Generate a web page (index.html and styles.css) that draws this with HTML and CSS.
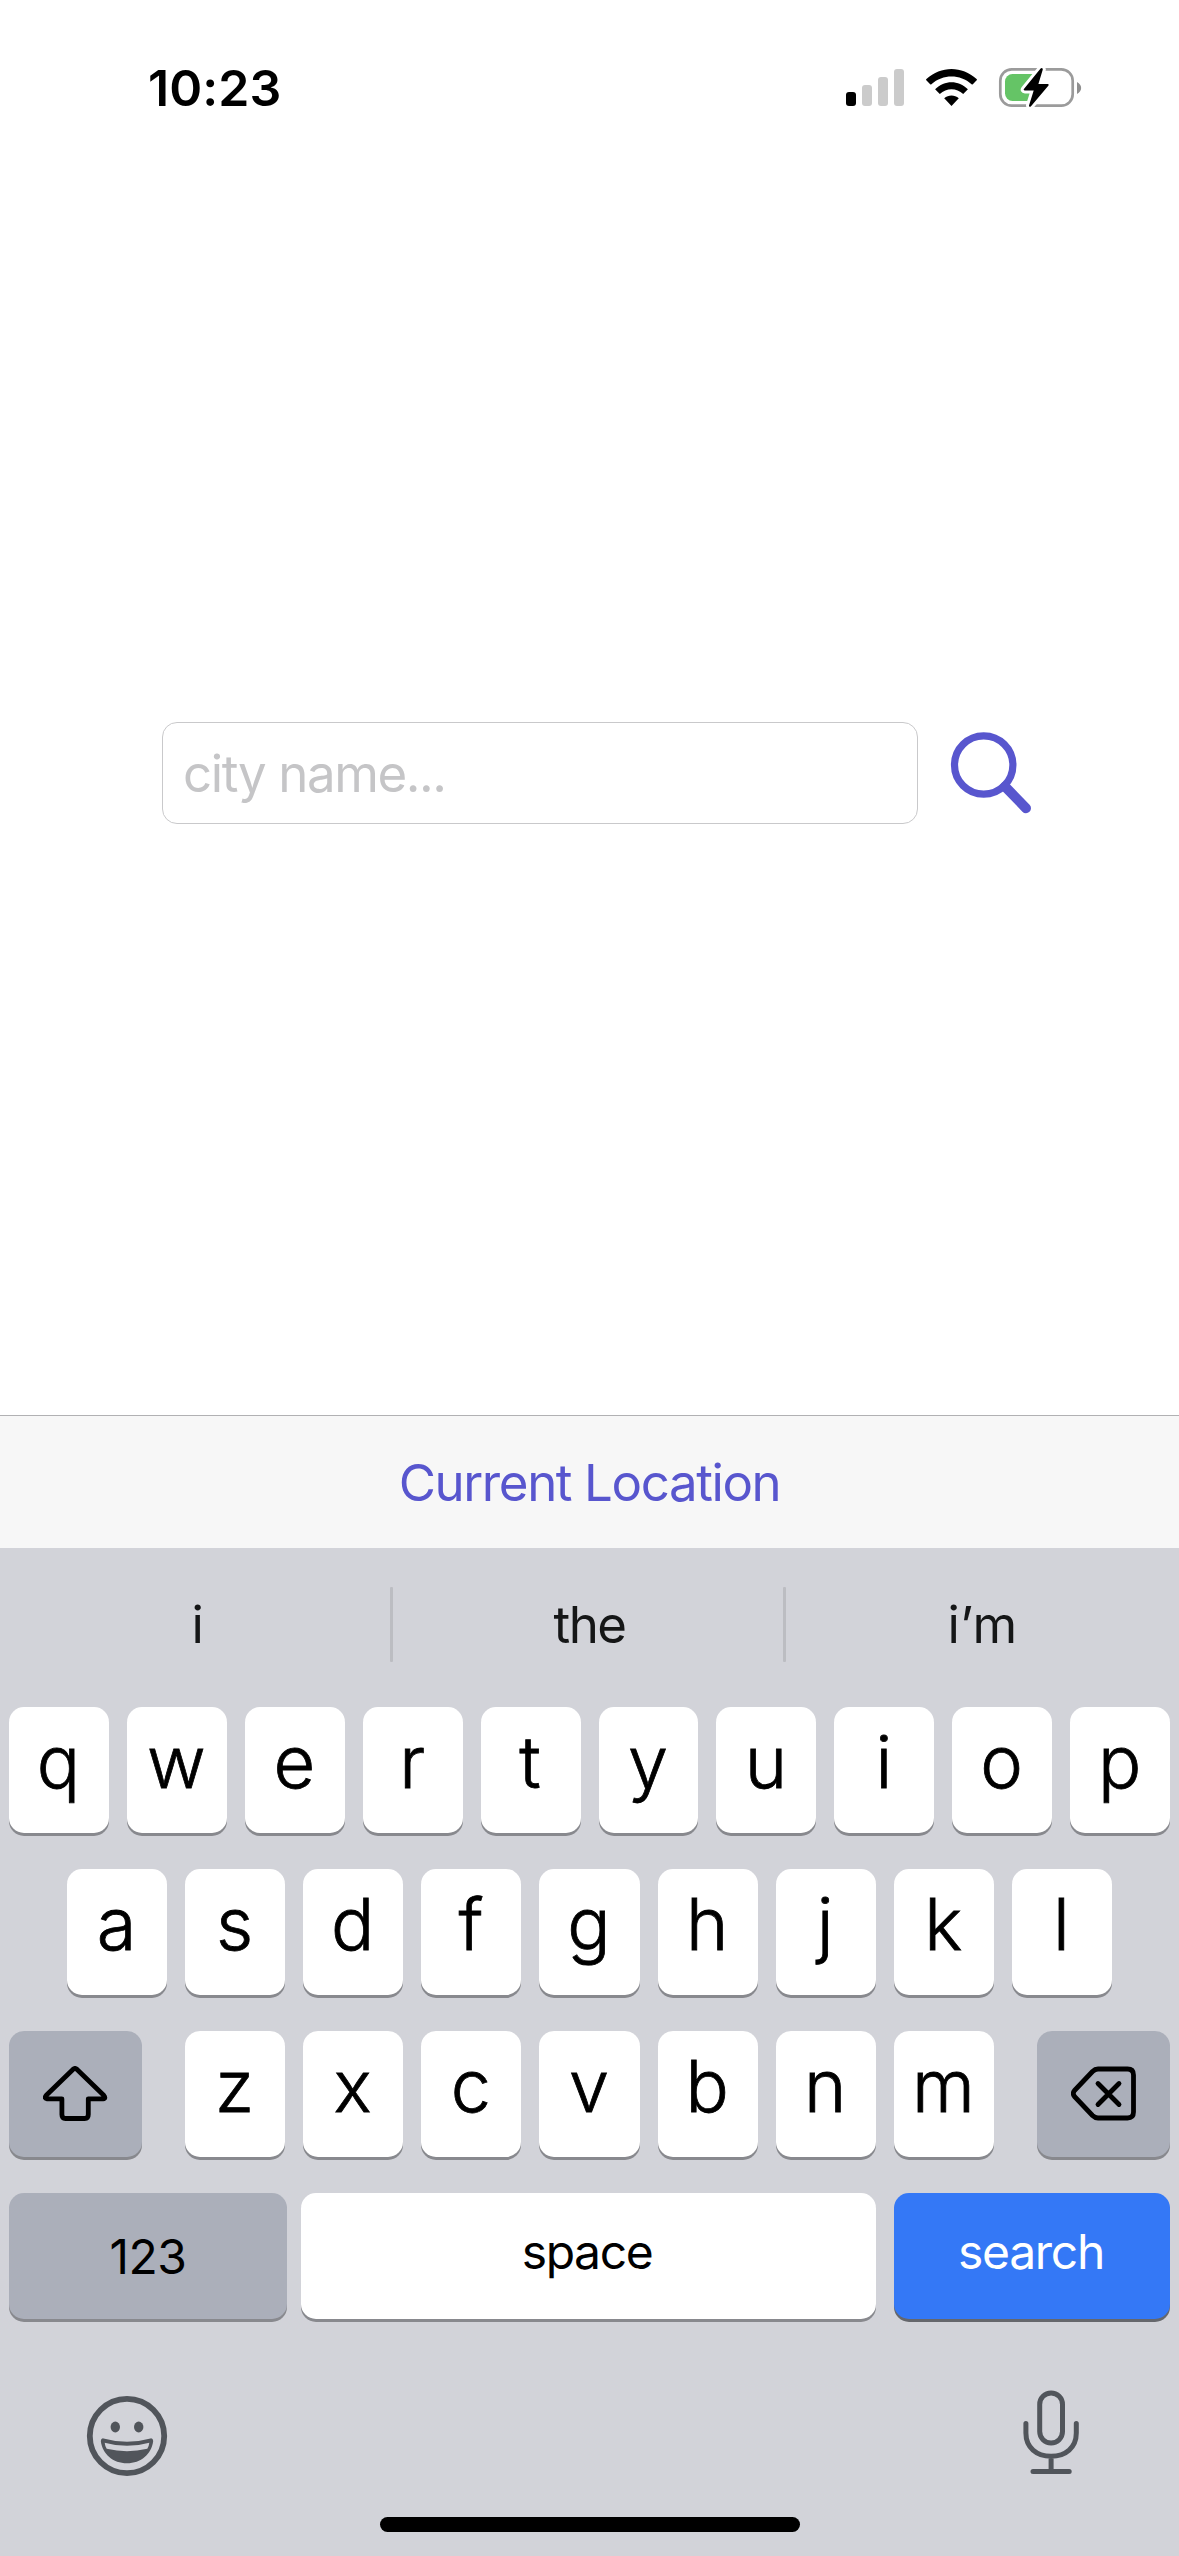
FILE: index.html
```html
<!DOCTYPE html>
<html lang="en">
<head>
<meta charset="utf-8">
<title>City search</title>
<link rel="stylesheet" href="styles.css">
</head>
<body>
<div class="screen">
  <header class="status">
    <span class="time">10:23</span>
    <svg class="status-icons" width="240" height="44" viewBox="0 0 240 44">
      <rect x="0" y="26" width="10" height="14" rx="3"/>
      <g fill="#cbcbcb">
        <rect x="16" y="19" width="10" height="21" rx="3"/>
        <rect x="32" y="11" width="10" height="29" rx="3"/>
        <rect x="48" y="3" width="10" height="37" rx="3"/>
      </g>
      <path d="M80.3 14.2Q79.8 13.6 80.4 13C95 -.4 116 -.4 130.600 13Q131.200 13.600 130.700 14.200L126.800 18.300Q126.200 18.800 125.600 18.300C114 8 97 8 85.400 18.300Q84.800 18.800 84.200 18.300Z"/>
      <path d="M89.100 23.300C98.500 13.900 112.500 13.900 121.900 23.300L117.200 27.900C110.500 21.600 100.500 21.600 93.800 27.900Z"/>
      <path d="M98.200 32.300C102.500 28.500 108.500 28.500 112.800 32.300L105.500 40Z"/>
      <rect x="154.300" y="3.300" width="72.400" height="36.400" rx="11.500" fill="none" stroke="#9b9b9b" stroke-width="2.700"/>
      <path d="M231 16V28C236.500 25 236.500 19 231 16Z" fill="#8f8f8f"/>
      <rect x="159" y="8" width="36" height="27" rx="7.500" fill="#65c466"/>
      <path d="M191 8H200V20H205L191 35H184Z" fill="#fff"/>
      <path transform="translate(-.7 0)" d="M195.300 2.600L178.800 22.800Q177.600 24.400 179.600 24.400H188.400L183.700 39.400Q183.600 41.500 185.500 40.400L203.200 19.600Q204.200 18 202.300 18H193.100L197.500 3.500Q197.100 1.200 195.300 2.600Z" stroke="#fff" stroke-width="6" paint-order="stroke"/>
    </svg>
  </header>

  <main class="content">
    <form class="search">
      <input class="city" type="text" placeholder="city name...">
      <svg class="glass" width="84" height="84" viewBox="0 0 84 84" fill="none" stroke="#5856ce" stroke-linecap="round">
        <circle cx="34.700" cy="34" r="29.200" stroke-width="7.200"/>
        <path d="M56 55.500L77 77.200" stroke-width="10"/>
      </svg>
    </form>
  </main>

  <div class="toolbar"><span class="location">Current Location</span></div>

  <section class="keyboard">
    <div class="suggestions">
      <span>i</span><i class="divider"></i><span>the</span><i class="divider"></i><span>i’m</span>
    </div>
    <div class="row">
      <b>q</b><b>w</b><b>e</b><b>r</b><b>t</b><b>y</b><b>u</b><b>i</b><b>o</b><b>p</b>
    </div>
    <div class="row row-home">
      <b>a</b><b>s</b><b>d</b><b>f</b><b>g</b><b>h</b><b>j</b><b>k</b><b>l</b>
    </div>
    <div class="row row-lower">
      <div class="key side">
        <svg width="66" height="56" viewBox="1 0 66 56" fill="none" stroke="#000" stroke-width="4.800" stroke-linejoin="round">
          <path d="M31.200 3.200Q33 1.700 34.800 3.200L61.700 29.300Q64.300 32.400 61 32.800H46.300V48.500Q46.300 52.500 42.700 52.500H23.500Q19.900 52.500 19.900 48.500V32.800H5Q1.700 32.400 4.300 29.300Z"/>
        </svg>
      </div>
      <div class="letters"><b>z</b><b>x</b><b>c</b><b>v</b><b>b</b><b>n</b><b>m</b></div>
      <div class="key side">
        <svg width="66" height="56" viewBox="0.500 0 66 56" fill="none" stroke="#000" stroke-width="4.800" stroke-linecap="round" stroke-linejoin="round">
          <path d="M27.500 3H57Q63 3 63 9V46Q63 52 57 52H27.500Q24.500 52 22 49.500L4 30.500Q1.600 27.500 4 24.500L22 5.500Q24.500 3 27.500 3Z"/>
          <path d="M27.500 17.500L48.500 38.500M48.500 17.500L27.500 38.500"/>
        </svg>
      </div>
    </div>
    <div class="row row-bottom">
      <div class="key numbers">123</div>
      <div class="key space">space</div>
      <div class="key go">search</div>
    </div>
    <footer class="dock">
      <svg width="82" height="82" viewBox="0 0 82 82" fill="#51555b">
        <circle cx="41" cy="41" r="37.200" fill="none" stroke="#51555b" stroke-width="5.800"/>
        <ellipse cx="29.300" cy="32" rx="4.700" ry="5.400"/>
        <ellipse cx="52.700" cy="32" rx="4.700" ry="5.400"/>
        <path fill-rule="evenodd" d="M17.500 43.400Q41 50 64.500 43.400Q67 43 67.200 46C65.500 59 55 68.300 41 68.300S16.500 59 14.800 46Q15 43 17.500 43.400ZM18.700 47.700Q19 51 20.700 53.800Q41 58.500 61.300 53.800Q63 51 63.300 47.700Q41 54 18.700 47.700Z"/>
      </svg>
      <svg width="58" height="88" viewBox="0 0 58 88" fill="none" stroke="#51555b" stroke-width="5" stroke-linecap="round">
        <rect x="17.700" y="4" width="22.800" height="50" rx="11.400"/>
        <path d="M3.900 34.500V44C3.900 58.500 14.500 67.200 29.100 67.200S54.300 58.500 54.300 44V34.500M29.100 67.200V82.500M11 82.500H47.200"/>
      </svg>
    </footer>
    <div class="home"></div>
  </section>
</div>
</body>
</html>
```
FILE: styles.css
```css
* {
  box-sizing: border-box;
}

body {
  margin: 0;
  background: #fff;
  font-family: Inter, "Liberation Sans", sans-serif;
  font-size: 51px;
  color: #000;
}

svg {
  display: block;
}

.screen {
  width: 1179px;
  height: 2556px;
  display: flex;
  flex-direction: column;
}

.status {
  height: 176px;
  padding: 66px 93px 0 148px;
  display: flex;
  justify-content: space-between;
  align-items: flex-start;
}

.time {
  font-size: 50px;
  font-weight: 600;
  line-height: 44px;
  letter-spacing: 0.1px;
}

.content {
  flex: 1;
  padding: 546px 0 0 162px;
}

.search {
  display: flex;
  gap: 31px;
}

.city {
  width: 756px;
  height: 102px;
  padding: 0 20px;
  border: 1px solid #c9c9cb;
  border-radius: 15px;
  background: #fff;
  font: inherit;
  letter-spacing: -1.4px;
}

.city::placeholder {
  color: #c5c5c7;
  opacity: 1;
}

.glass {
  margin-top: 9px;
}

.toolbar {
  height: 133px;
  border-top: 1px solid #b1b1b3;
  background: #f7f7f7;
  display: flex;
  justify-content: center;
  align-items: center;
  color: #5856ce;
}

.location {
  letter-spacing: -1.4px;
}

.keyboard {
  height: 1008px;
  padding: 0 9px;
  background: #d2d3d9;
  display: flex;
  flex-direction: column;
}

.suggestions {
  height: 159px;
  margin: 0 -9px;
  padding-top: 39px;
  display: grid;
  grid-template-columns: 390px 3px 390px 3px 1fr;
  align-items: start;
  color: #151617;
  line-height: 75px;
  text-align: center;
  letter-spacing: -1.5px;
}

.suggestions span:first-child {
  padding-left: 4px;
}

.suggestions span:nth-child(3) {
  padding-left: 3px;
}

.suggestions span:last-child {
  letter-spacing: 0.3px;
}

.divider {
  height: 75px;
  border-radius: 1px;
  background: #bcbdc2;
}

.row {
  height: 126px;
  margin-bottom: 36px;
  display: flex;
  gap: 18px;
}

.row-home {
  padding: 0 58px;
}

.row-lower {
  gap: 43px;
}

.letters {
  flex: 1;
  display: flex;
  gap: 18px;
}

.row b,
.key {
  border-radius: 15px;
  background: #fff;
  box-shadow: 0 3px 0 #88898e;
}

.row b {
  flex: 1 1 0;
  padding-right: 1px;
  font-size: 72px;
  font-weight: 300;
  -webkit-text-stroke: 0.8px #000;
  line-height: 110px;
  text-align: center;
}

.key {
  display: flex;
  justify-content: center;
  align-items: center;
  font-size: 48px;
}

.side {
  width: 133px;
  background: #abafba;
}

.row-bottom {
  gap: 0;
}

.numbers {
  width: 278px;
  margin-right: 14px;
  background: #abafba;
  letter-spacing: -0.5px;
}

.space {
  width: 575px;
  margin-right: 18px;
  padding: 0 3px 9px 0;
  letter-spacing: -1.4px;
}

.go {
  flex: 1;
  padding: 0 2px 9px 0;
  background: #3478f6;
  box-shadow: 0 3px 0 #65676c;
  color: #fff;
  letter-spacing: -1.3px;
}

.dock {
  height: 162px;
  padding: 34px 90px 0 77px;
  display: flex;
  justify-content: space-between;
}

.dock svg:first-child {
  margin-top: 6px;
}

.home {
  width: 420px;
  height: 15px;
  margin: 0 auto;
  border-radius: 8px;
  background: #000;
}
```
